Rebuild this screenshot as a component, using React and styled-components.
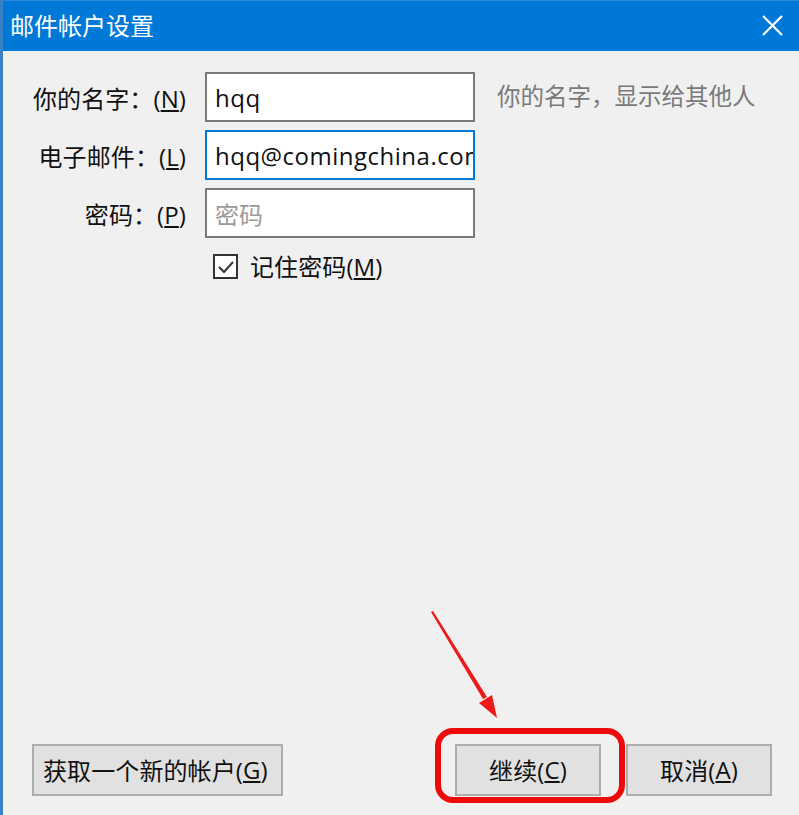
import React from "react";
import styled, { createGlobalStyle } from "styled-components";

const GlobalStyle = createGlobalStyle`
  html, body { margin: 0; padding: 0; background: #f0f0f0; }
  * { box-sizing: border-box; }
`;

const FONT = `"Segoe UI", "Open Sans", "Noto Sans CJK SC", sans-serif`;

const Window = styled.div`
  position: relative;
  width: 799px;
  height: 815px;
  display: flex;
  flex-direction: column;
  background: #f0f0f0;
  border-left: 3px solid #3a82c6;
  font-family: ${FONT};
  color: #111;
  overflow: hidden;
`;

const TitleBar = styled.div`
  height: 51px;
  flex: none;
  display: flex;
  align-items: center;
  justify-content: space-between;
  background: #0078d7;
  border-top: 1px solid #2a8ade;
  padding: 0 16px 2px 7px;
`;

const Title = styled.span`
  color: #fff;
  font-size: 24px;
  line-height: 1;
  font-family: "Noto Sans CJK SC", sans-serif;
`;

const CloseBtn = styled.div`
  width: 22px;
  height: 22px;
  display: flex;
  align-items: center;
  justify-content: center;
`;

const Content = styled.div`
  flex: 1;
  display: flex;
  flex-direction: column;
  padding-top: 21px;
`;

const FormGrid = styled.div`
  display: grid;
  grid-template-columns: 183px 270px auto;
  grid-auto-rows: 50px;
  column-gap: 19px;
  row-gap: 8px;
  align-items: center;
`;

const Label = styled.label`
  justify-self: end;
  font-size: 24px;
  white-space: nowrap;
  letter-spacing: 0.1px;
`;

const Input = styled.div`
  height: 50px;
  border: 2px solid ${(p) => (p.$focused ? "#0078d7" : "#7a7a7a")};
  background: #fff;
  display: flex;
  align-items: center;
  padding-left: 8px;
  font-size: 24px;
  letter-spacing: ${(p) => (p.$placeholder ? "0" : "0.5px")};
  overflow: hidden;
  white-space: nowrap;
  color: ${(p) => (p.$placeholder ? "#9a9a9a" : "#111")};
  font-family: ${(p) => (p.$placeholder ? `"Noto Sans CJK SC", sans-serif` : FONT)};
`;

const Hint = styled.span`
  padding-left: 3px;
  font-size: 23.5px;
  color: #7a7a7a;
  white-space: nowrap;
  align-self: start;
  padding-top: 6px;
  font-family: "Noto Sans CJK SC", sans-serif;
`;

const CheckRow = styled.div`
  display: flex;
  align-items: center;
  margin: 16px 0 0 210px;
  gap: 12px;
  line-height: 1;
`;

const Box = styled.div`
  width: 25px;
  height: 25px;
  border: 2px solid #333;
  background: #fff;
  display: flex;
  align-items: center;
  justify-content: center;
`;

const CheckLabel = styled.span`
  font-size: 24px;
  letter-spacing: 0.1px;
`;

const Spacer = styled.div`
  flex: 1;
`;

const ButtonBar = styled.div`
  display: flex;
  align-items: center;
  padding: 0 27px 19px 29px;
  gap: 25px;
`;

const Button = styled.div`
  height: 52px;
  width: ${(p) => p.$w}px;
  margin-left: ${(p) => (p.$push ? "auto" : "0")};
  background: #e1e1e1;
  border: 2px solid #adadad;
  display: flex;
  align-items: center;
  justify-content: ${(p) => (p.$left ? "flex-start" : "center")};
  padding-left: ${(p) => (p.$left ? "9px" : "0")};
  padding-bottom: 2px;
  font-size: 24px;
  letter-spacing: 0.1px;
  white-space: nowrap;
`;

const Highlight = styled.div`
  position: absolute;
  left: 432px;
  top: 728px;
  width: 190px;
  height: 75px;
  border: 6px solid #ee0a0a;
  border-radius: 18px;
  pointer-events: none;
`;

const Overlay = styled.svg`
  position: absolute;
  left: -3px;
  top: 0;
  pointer-events: none;
`;

const M = ({ children }) => <u>{children}</u>;

export default function App() {
  return (
    <>
      <GlobalStyle />
      <Window>
        <TitleBar>
          <Title>邮件帐户设置</Title>
          <CloseBtn>
            <svg width="21" height="21" viewBox="0 0 21 21">
              <path d="M1 1 L20 20 M20 1 L1 20" stroke="#fff" strokeWidth="2.2" />
            </svg>
          </CloseBtn>
        </TitleBar>
        <Content>
          <FormGrid>
            <Label>你的名字：(<M>N</M>)</Label>
            <Input>hqq</Input>
            <Hint>你的名字，显示给其他人</Hint>
            <Label>电子邮件：(<M>L</M>)</Label>
            <Input $focused>hqq@comingchina.com</Input>
            <span />
            <Label>密码：(<M>P</M>)</Label>
            <Input $placeholder>密码</Input>
            <span />
          </FormGrid>
          <CheckRow>
            <Box>
              <svg width="18" height="14" viewBox="0 0 18 14">
                <path d="M2 7 L7 12 L16 2" fill="none" stroke="#333" strokeWidth="2" />
              </svg>
            </Box>
            <CheckLabel>记住密码(<M>M</M>)</CheckLabel>
          </CheckRow>
          <Spacer />
          <ButtonBar>
            <Button $w={251} $left>获取一个新的帐户(<M>G</M>)</Button>
            <Button $w={146} $push>继续(<M>C</M>)</Button>
            <Button $w={146}>取消(<M>A</M>)</Button>
          </ButtonBar>
        </Content>
        <Highlight />
        <Overlay width="799" height="815" viewBox="0 0 799 815">
          <polygon points="431,612 433,611 487,697 483,699" fill="#ee1a1a" />
          <polygon points="497,718 479,703 492,695" fill="#ee1a1a" />
        </Overlay>
      </Window>
    </>
  );
}
